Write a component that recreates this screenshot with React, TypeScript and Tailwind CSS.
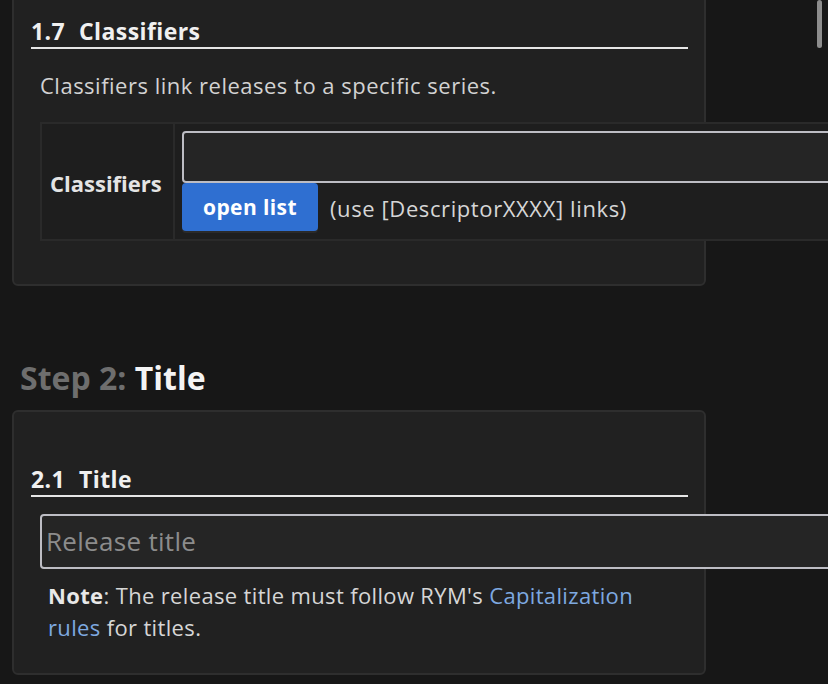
import React from 'react';

const font = { fontFamily: '"Open Sans", Lato, sans-serif' };

const SectionHeading: React.FC<{ num: string; title: string }> = ({ num, title }) => (
  <div className="mx-[17px] mr-[16px] border-b-2 border-[#e6e6e6] pb-[2px] text-[23px] font-bold leading-[28px] tracking-[0.4px] text-[#f0f0f0]">
    <span className="mr-[14px]">{num}</span>
    <span>{title}</span>
  </div>
);

export default function App() {
  return (
    <div className="relative min-h-screen overflow-hidden bg-[#171717]" style={font}>
      <div className="absolute right-[6px] top-0 h-[48px] w-[5px] rounded-full bg-[#8d8d8d]" />

      <div className="ml-[12px] w-[694px]">
        {/* section 1.7 */}
        <div className="-mt-[12px] rounded-[6px] border-2 border-[#2e2e2e] bg-[#212121] pb-[43px] pt-[27px]">
          <SectionHeading num="1.7" title="Classifiers" />
          <p className="ml-[26px] mt-[21px] text-[22px] leading-[30px] tracking-[0.5px] text-[#d2d2d2]">
            Classifiers link releases to a specific series.
          </p>
          <table className="ml-[26px] mt-[22px] w-[900px] border-collapse">
            <tbody>
              <tr>
                <td className="w-[133px] border-2 border-[#2a2a2a] bg-[#1e1e1e] pl-[8px] pt-[4px] text-[22px] font-bold text-[#e4e4e4]">
                  Classifiers
                </td>
                <td className="border-2 border-[#2a2a2a] bg-[#1e1e1e] px-[7px] pb-[8px] pt-[7px]">
                  <div className="h-[52px] w-full rounded-l-[4px] border-2 border-[#bdbdc4] bg-[#252525]" />
                  <div className="flex items-center">
                    <button className="h-[48px] w-[136px] rounded-[4px] bg-[#2f6fd1] pt-[2px] text-[21px] font-bold tracking-[0.4px] text-white shadow-[0_2px_0_#2a2a2a]">
                      open list
                    </button>
                    <span className="ml-[12px] pt-[2px] text-[22px] tracking-[0.6px] text-[#d6d6d6]">(use [DescriptorXXXX] links)</span>
                  </div>
                </td>
              </tr>
            </tbody>
          </table>
        </div>

        {/* step 2 */}
        <h2 className="ml-[8px] mt-[72px] text-[32px] font-bold leading-[40px]">
          <span className="text-[#6e6e6e]">Step 2: </span>
          <span className="text-[#f4f4f4]">Title</span>
        </h2>

        <div className="mt-[12px] rounded-[6px] border-2 border-[#2e2e2e] bg-[#212121] pb-[30px] pt-[53px]">
          <SectionHeading num="2.1" title="Title" />
          <div className="ml-[26px] mt-[17px] flex h-[55px] w-[900px] items-center rounded-l-[4px] border-2 border-[#bdbdc4] bg-[#252525] pl-[4px]">
            <span className="text-[26px] tracking-[0.3px] text-[#8c8c8c]">Release title</span>
          </div>
          <p className="ml-[34px] mr-[16px] mt-[10px] text-[22px] leading-[32px] tracking-[0.35px] text-[#d6d6d6]">
            <span className="font-bold text-[#e8e8e8]">Note</span>: The release title must follow RYM's{' '}
            <a href="#" className="text-[#7ea9e0]">Capitalization rules</a> for titles.
          </p>
        </div>
      </div>
    </div>
  );
}
